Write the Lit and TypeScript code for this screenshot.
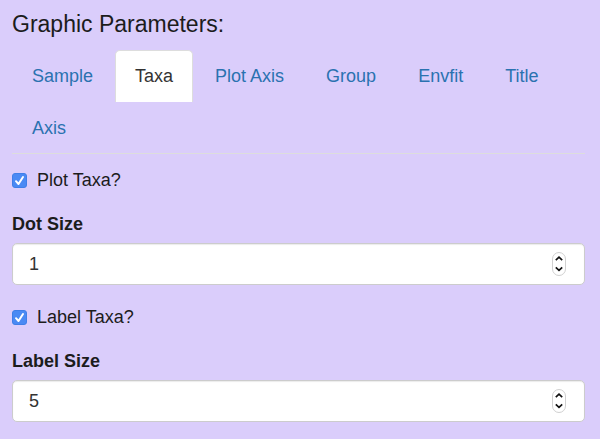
import { LitElement, html, css } from "lit";
import { customElement, property, state } from "lit/decorators.js";
import { classMap } from "lit/directives/class-map.js";

@customElement("check-field")
class CheckField extends LitElement {
  @property() label = "";
  @property({ type: Boolean }) checked = false;

  static styles = css`
    :host {
      display: block;
    }
    .check {
      display: flex;
      align-items: center;
      gap: 10px;
      line-height: 24px;
    }
    .box {
      display: grid;
      width: 15px;
      height: 15px;
    }
    .box > * {
      grid-area: 1 / 1;
    }
    .input {
      appearance: none;
      width: 15px;
      height: 15px;
      margin: 0;
      border: 1px solid #8c8c96;
      border-radius: 3px;
      background: #fff;
    }
    .input:checked {
      border-color: #3f7fe8;
      background: #4a8af4;
    }
    .mark {
      width: 15px;
      height: 15px;
      fill: none;
      stroke: #fff;
      stroke-width: 2;
      stroke-linecap: round;
      stroke-linejoin: round;
      pointer-events: none;
    }
  `;

  render() {
    return html`
      <label class="check">
        <span class="box">
          <input
            class="input"
            type="checkbox"
            .checked=${this.checked}
            @change=${(e: Event) => (this.checked = (e.target as HTMLInputElement).checked)}
          />
          <svg class="mark" viewBox="0 0 15 15" aria-hidden="true">
            <path d="M4 8.2 6.5 11 11 4" />
          </svg>
        </span>
        <span>${this.label}</span>
      </label>
    `;
  }
}

@customElement("number-field")
class NumberField extends LitElement {
  @property() label = "";
  @property({ type: Number }) value = 0;

  static styles = css`
    :host {
      display: block;
    }
    .label {
      display: block;
      margin-bottom: 6px;
      font-weight: 700;
      line-height: 25px;
    }
    .control {
      position: relative;
    }
    .input {
      display: block;
      box-sizing: border-box;
      width: 100%;
      height: 42px;
      padding: 0 36px 0 16px;
      border: 1px solid #ccc;
      border-radius: 5px;
      background: #fff;
      box-shadow: inset 0 1px 1px rgba(0, 0, 0, 0.08);
      color: #333;
      font: inherit;
      appearance: textfield;
    }
    .input::-webkit-inner-spin-button,
    .input::-webkit-outer-spin-button {
      appearance: none;
      margin: 0;
    }
    .stepper {
      position: absolute;
      top: 0;
      bottom: 0;
      right: 19px;
      box-sizing: border-box;
      width: 14px;
      height: 24px;
      margin: auto 0;
      display: flex;
      flex-direction: column;
      overflow: hidden;
      border: 1px solid #d0d0d0;
      border-radius: 7px;
      background: #fff;
    }
    .step {
      flex: 1;
      display: grid;
      place-items: center;
      min-height: 0;
      padding: 0;
      border: 0;
      background: none;
      color: #111;
    }
    .arrow {
      width: 12px;
      height: 11px;
      fill: none;
      stroke: currentColor;
      stroke-width: 1.7;
    }
  `;

  render() {
    return html`
      <label class="label" for="number">${this.label}</label>
      <div class="control">
        <input
          class="input"
          id="number"
          type="number"
          .value=${String(this.value)}
          @input=${(e: Event) => (this.value = Number((e.target as HTMLInputElement).value))}
        />
        <div class="stepper">
          <button class="step" type="button" aria-label="Increase" @click=${() => this.value++}>
            <svg class="arrow" viewBox="0 0 12 11"><path d="M2.8 7.2 6 4.2 9.2 7.2" /></svg>
          </button>
          <button class="step" type="button" aria-label="Decrease" @click=${() => this.value--}>
            <svg class="arrow" viewBox="0 0 12 11"><path d="M2.8 3.4 6 6.4 9.2 3.4" /></svg>
          </button>
        </div>
      </div>
    `;
  }
}

@customElement("app-root")
class AppRoot extends LitElement {
  @state() private active = "Taxa";

  private tabs = ["Sample", "Taxa", "Plot Axis", "Group", "Envfit", "Title", "Axis"];

  static styles = css`
    :host {
      display: block;
      box-sizing: border-box;
      min-height: 100vh;
      padding: 8px 15px 17px 12px;
      background: #dacdfb;
      color: #1c1c1c;
      font: 18px/26px "Liberation Sans", Arial, sans-serif;
    }
    .title {
      margin: 0 0 10px;
      font-size: 23px;
      font-weight: 400;
      line-height: 32px;
    }
    .tabs {
      display: flex;
      flex-wrap: wrap;
      gap: 1px 2px;
      margin: 0 0 14px;
      padding: 0;
      border-bottom: 1px solid #ddd;
      list-style: none;
    }
    .item {
      margin-bottom: -1px;
    }
    .tab {
      display: block;
      padding: 12px 19px;
      border: 1px solid transparent;
      border-bottom: 0;
      border-radius: 5px 5px 0 0;
      color: #2a72b0;
      line-height: 27px;
      text-decoration: none;
    }
    .tab.active {
      border-color: #ddd;
      background: #fff;
      color: #333;
    }
    .fields {
      display: grid;
      gap: 20px;
    }
  `;

  private select(e: Event, tab: string) {
    e.preventDefault();
    this.active = tab;
  }

  render() {
    return html`
      <h4 class="title">Graphic Parameters:</h4>
      <ul class="tabs">
        ${this.tabs.map(
          (tab) => html`
            <li class="item">
              <a
                class=${classMap({ tab: true, active: tab === this.active })}
                href="#"
                @click=${(e: Event) => this.select(e, tab)}
                >${tab}</a
              >
            </li>
          `
        )}
      </ul>
      <div class="fields">
        <check-field label="Plot Taxa?" checked></check-field>
        <number-field label="Dot Size" value="1"></number-field>
        <check-field label="Label Taxa?" checked></check-field>
        <number-field label="Label Size" value="5"></number-field>
      </div>
    `;
  }
}
